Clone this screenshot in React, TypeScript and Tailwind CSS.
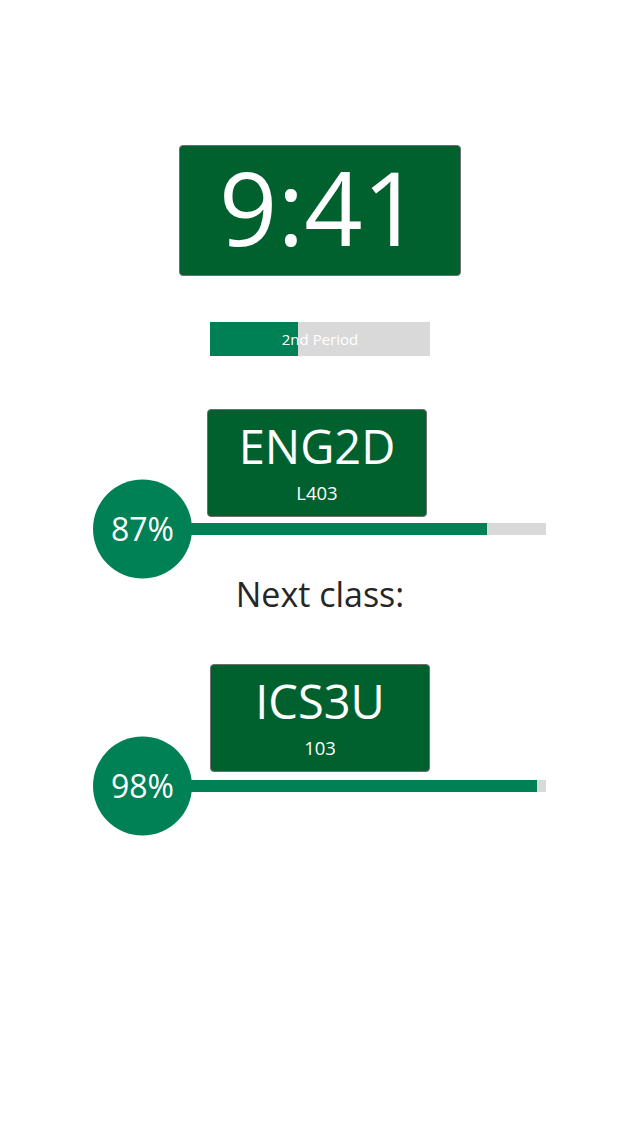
const font = { fontFamily: '"Open Sans", "Noto Sans", sans-serif' }

const classes = [
  { code: 'ENG2D', room: 'L403', pct: 87, gap: 'mt-[6px]', shift: 'ml-[-6px]' },
  { code: 'ICS3U', room: '103', pct: 98, gap: 'mt-[8px]', shift: 'ml-0' },
]

function ClassCard({ code, room, pct, gap, shift }: { code: string; room: string; pct: number; gap: string; shift: string }) {
  return (
    <div className="flex flex-col items-center">
      <div className={`${shift} box-border w-[220px] h-[108px] rounded-[4px] border border-[#6f6f6f] bg-[#00612f] pt-[13px] text-center text-white`}>
        <div className="text-[47px] leading-none">{code}</div>
        <div className="mt-[14px] text-[18.5px] leading-none">{room}</div>
      </div>
      <div className={`${gap} relative w-[452px] h-[12px] bg-[#d9d9d9]`}>
        <div className="h-full bg-[#008055]" style={{ width: `${pct}%` }} />
        <div className="absolute left-[-1px] top-1/2 -translate-y-1/2 w-[99px] h-[99px] rounded-full bg-[#008055] flex items-center justify-center pb-[2px] text-[32px] leading-none text-white">
          {pct}%
        </div>
      </div>
    </div>
  )
}

export default function App() {
  return (
    <div className="w-full min-h-[1136px] bg-white flex flex-col items-center pt-[145px]" style={font}>
      <div className="box-border w-[282px] h-[131px] rounded-[4px] border border-[#6f6f6f] bg-[#00612f] pt-[10px] text-center text-white text-[102px] leading-none">
        9:41
      </div>

      <div className="mt-[46px] relative w-[220px] h-[34px] bg-[#d9d9d9]">
        <div className="h-full w-[40%] bg-[#008055]" />
        <div className="absolute inset-0 flex items-center justify-center text-[15px] text-white leading-none">
          2nd Period
        </div>
      </div>

      <div className="mt-[53px]">
        <ClassCard {...classes[0]} />
      </div>

      <div className="mt-[42px] text-[34px] leading-none text-[#262626]">Next class:</div>

      <div className="mt-[53px]">
        <ClassCard {...classes[1]} />
      </div>
    </div>
  )
}
